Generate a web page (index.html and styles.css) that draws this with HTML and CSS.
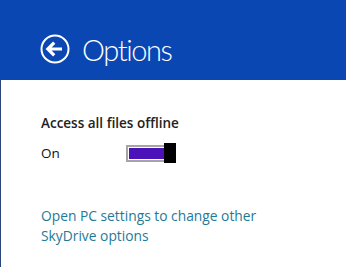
FILE: index.html
```html
<!DOCTYPE html>
<html>
<head>
<meta charset="utf-8">
<link rel="stylesheet" href="styles.css">
</head>
<body>
<div class="page">
  <header class="header">
    <svg class="back" width="30" height="30" viewBox="0 0 30 30">
      <circle cx="15" cy="15" r="13.5" fill="none" stroke="#fff" stroke-width="2"/>
      <path d="M8.5 15 L22 15 M14.2 8.6 L7.8 15 L14.2 21.4" fill="none" stroke="#fff" stroke-width="3.2" stroke-linejoin="miter"/>
    </svg>
    <h1 class="title">Options</h1>
  </header>
  <main class="content">
    <div class="setting">Access all files offline</div>
    <div class="row">
      <span class="state">On</span>
      <span class="toggle"><span class="track"><span class="fill"></span></span><span class="thumb"></span></span>
    </div>
    <a class="link" href="#">Open PC settings to change other SkyDrive options</a>
  </main>
</div>
</body>
</html>
```

FILE: styles.css
```css
html, body { margin: 0; padding: 0; background: #fff; }
body { width: 346px; height: 267px; overflow: hidden; font-family: "Open Sans", "Noto Sans", sans-serif; }
.page { height: 267px; border-left: 1px solid #2a4577; box-sizing: border-box; }
.header {
  height: 80px; background: #0b47b3; margin-left: -1px;
  display: flex; align-items: center; padding-left: 40px; box-sizing: border-box;
  padding-top: 20px;
}
.back { display: block; flex: none; margin-top: -2px; }
.title { margin: 0 0 0 12px; color: #fff; font-family: "Lato", "Open Sans", sans-serif; font-weight: 300; font-size: 29px; line-height: 36px; letter-spacing: -1.4px; }
.content { padding: 34px 0 0 40px; }
.setting { font-size: 13.5px; font-weight: 600; color: #222; line-height: 18px; }
.row { display: flex; align-items: center; margin-top: 10px; height: 22px; }
.state { font-size: 13.5px; color: #111; width: 85px; }
.toggle { display: flex; align-items: center; }
.track { width: 38px; height: 17px; box-sizing: border-box; border: 2px solid #a5a5a5; padding: 1px; border-right: none; padding-right: 0; }
.fill { display: block; height: 100%; background: #4a12b8; }
.thumb { width: 12px; height: 20px; background: #000; }
.link { display: block; margin-top: 42px; width: 240px; font-size: 13.8px; line-height: 20px; color: #1e7a98; text-decoration: none; }
```
